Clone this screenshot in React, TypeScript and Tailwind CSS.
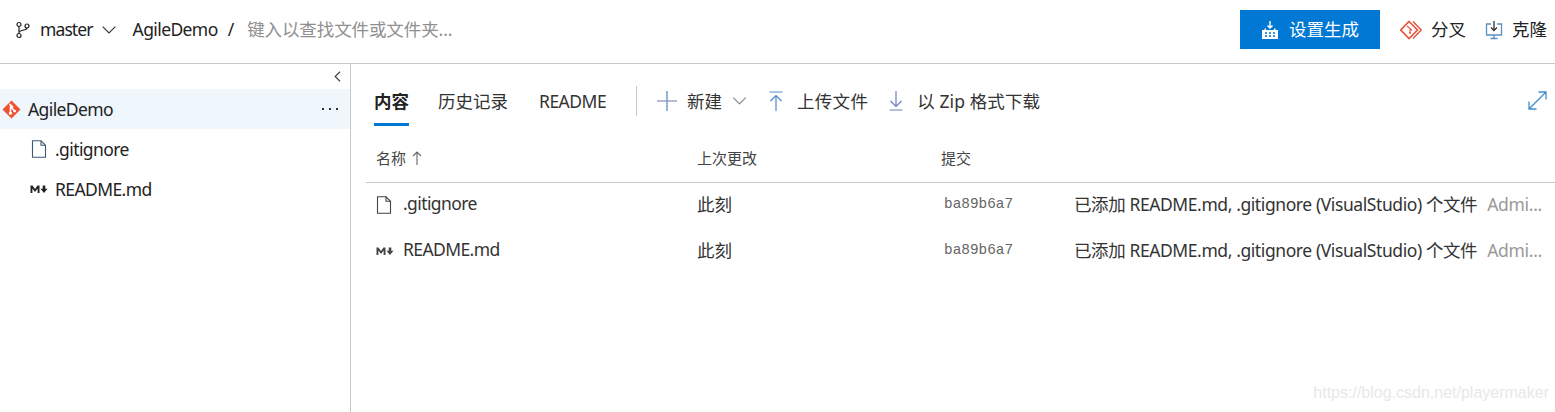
import React from "react";

const font = { fontFamily: '"Noto Sans", "Noto Sans CJK SC", sans-serif' };

function BranchIcon() {
  return (
    <svg width="16" height="18" viewBox="0 0 16 18" fill="none" stroke="#222" strokeWidth="1.2">
      <circle cx="4" cy="3.5" r="2" />
      <circle cx="4" cy="14.5" r="2" />
      <circle cx="12" cy="5" r="2" />
      <path d="M4 5.5v7M4 11.5c0-3 8-1.5 8-4.5" />
    </svg>
  );
}

function GitLogo({ size = 19 }: { size?: number }) {
  return (
    <svg width={size} height={size} viewBox="0 0 18 18">
      <path d="M9 0.5l8.5 8.5L9 17.5 0.5 9z" fill="#f05133" />
      <path d="M7 3.5l3.5 3.5M8 5v7.5M8 6.5l4 4" stroke="#fff" strokeWidth="1.4" fill="none" />
      <circle cx="8" cy="12.5" r="1.5" fill="#fff" />
      <circle cx="12" cy="10.5" r="1.3" fill="#fff" />
    </svg>
  );
}

function ForkIcon() {
  return (
    <svg width="22" height="22" viewBox="0 0 22 22" fill="none">
      <path d="M9 2.5l8.5 8.5L9 19.5 0.8 11z" stroke="#e8573f" strokeWidth="1.7" />
      <path d="M13 2.5l8.2 8.5L13 19.5" stroke="#e8573f" strokeWidth="1.5" />
      <path d="M7 7l3 2.5v4.5M10 9.5l2 2" stroke="#e8573f" strokeWidth="1.1" />
      <circle cx="10" cy="14" r="1.1" fill="#e8573f" />
    </svg>
  );
}

function CloneIcon() {
  return (
    <svg width="18" height="20" viewBox="0 0 18 20" fill="none">
      <path d="M6 4H1.5v11h15V4H12" stroke="#5a8fc4" strokeWidth="1.3" />
      <path d="M5.5 18.5h7M9 15v3.5" stroke="#5a8fc4" strokeWidth="1.3" />
      <path d="M9 1v9M6 7.5l3 3 3-3" stroke="#333" strokeWidth="1.3" />
    </svg>
  );
}

function BuildIcon() {
  return (
    <svg width="18" height="20" viewBox="0 0 18 20" fill="none">
      <path d="M9 1v7M6.5 5.5L9 8l2.5-2.5" stroke="#fff" strokeWidth="1.4" />
      <path d="M1 19V10h2.5V8.5H5V10h8V8.5h1.5V10H17v9z" fill="#fff" />
      <path d="M4 13h2M8 13h2M12 13h2M4 16h2M8 16h2M12 16h2" stroke="#0078d4" strokeWidth="1.4" />
    </svg>
  );
}

function FileIcon({ stroke = "#444" }: { stroke?: string }) {
  return (
    <svg width="16" height="18" viewBox="0 0 16 18" fill="none">
      <path d="M1.5 0.8h8.5l4.5 4.5v11.9h-13z" stroke={stroke} strokeWidth="1.1" />
      <path d="M10 0.8v4.5h4.5" stroke={stroke} strokeWidth="1.1" />
    </svg>
  );
}

function MdIcon({ color = "#222" }: { color?: string }) {
  return (
    <svg width="18" height="10" viewBox="0 0 18 10">
      <path d="M0.5 9V1.5h2L5 5l2.5-3.5h2V9H7.6V4.6L5 8 2.4 4.6V9z" fill={color} />
      <path d="M12.7 1.5h2.6v3.2h2.2L14 8.9l-3.5-4.2h2.2z" fill={color} />
    </svg>
  );
}

function Chevron({ color = "#333", w = 14 }: { color?: string; w?: number }) {
  return (
    <svg width={w} height="8" viewBox="0 0 14 8" fill="none">
      <path d="M0.7 0.7L7 7l6.3-6.3" stroke={color} strokeWidth="1.1" />
    </svg>
  );
}

function PlusIcon() {
  return (
    <svg width="20" height="20" viewBox="0 0 20 20" fill="none">
      <path d="M10 0v20" stroke="#5b8fc7" strokeWidth="1.3" />
      <path d="M0 10h20" stroke="#8a96c0" strokeWidth="1.3" />
    </svg>
  );
}

function UploadIcon() {
  return (
    <svg width="14" height="20" viewBox="0 0 14 20" fill="none" stroke="#4e8ac8" strokeWidth="1.2">
      <path d="M0.5 1h13M7 4.5V20M1.5 10L7 4.5 12.5 10" />
    </svg>
  );
}

function DownloadIcon() {
  return (
    <svg width="14" height="20" viewBox="0 0 14 20" fill="none" stroke="#6c7fc4" strokeWidth="1.2">
      <path d="M0.5 19h13M7 0v15M1.5 10L7 15.5 12.5 10" />
    </svg>
  );
}

function ExpandIcon() {
  return (
    <svg width="19" height="19" viewBox="0 0 19 19" fill="none" stroke="#3f8fd0" strokeWidth="1.3">
      <path d="M1 18L18 1M10.5 1H18v7.5M1 10.5V18h7.5" />
    </svg>
  );
}

function Row({ icon, name }: { icon: React.ReactNode; name: string }) {
  return (
    <div className="flex h-[46px] items-center text-[#333] text-[17.5px] pb-[3px]">
      <div className="w-[321px] flex items-center pl-[10px]">
        <span className="w-[27px] flex items-center">{icon}</span>
        <span className="tracking-[-0.6px] -mt-[2px]">{name}</span>
      </div>
      <div className="w-[246px] pl-[10px] text-[17.5px]">此刻</div>
      <div className="w-[141px] pl-[11px] text-[14.4px] text-[#666]" style={{ fontFamily: '"Liberation Mono", monospace' }}>ba89b6a7</div>
      <div className="flex-1 flex items-center whitespace-nowrap overflow-hidden">
        <span className="tracking-[-0.41px]">已添加 README.md, .gitignore (VisualStudio) 个文件</span>
        <span className="ml-[10px] text-[#999] tracking-[-0.3px]">Admi...</span>
      </div>
    </div>
  );
}

export default function App() {
  return (
    <div className="relative w-[1555px] h-[412px] bg-white overflow-hidden flex flex-col text-[#222]" style={font}>
      <header className="h-[64px] shrink-0 border-b border-[#c8c8c8] flex items-center pl-[15px] pr-[8px] text-[17.5px] pb-[4px]">
        <BranchIcon />
        <span className="ml-[9px] tracking-[-0.9px]">master</span>
        <span className="ml-[9px]"><Chevron /></span>
        <span className="ml-[17px] tracking-[-0.6px]">AgileDemo</span>
        <span className="ml-[10px]">/</span>
        <span className="ml-[13px] text-[#8f8f8f] tracking-[-0.1px]">键入以查找文件或文件夹...</span>
        <div className="flex-1" />
        <button className="w-[140px] h-[39px] bg-[#0078d4] text-white flex items-center justify-center gap-[10px]">
          <BuildIcon />
          设置生成
        </button>
        <span className="ml-[20px] flex items-center"><ForkIcon /></span>
        <span className="ml-[9px]">分叉</span>
        <span className="ml-[19px] flex items-center"><CloneIcon /></span>
        <span className="ml-[9px]">克隆</span>
      </header>
      <div className="flex flex-1 min-h-0">
        <aside className="w-[351px] shrink-0 border-r border-[#c8c8c8] flex flex-col">
          <div className="h-[25px] flex items-center justify-end pr-[9px]">
            <svg width="7" height="11" viewBox="0 0 7 11" fill="none"><path d="M6 0.8L1.2 5.5 6 10.2" stroke="#444" strokeWidth="1.2" /></svg>
          </div>
          <div className="h-[40px] bg-[#eff6fc] flex items-center pl-[2px] pr-[12px] text-[17.5px]">
            <GitLogo />
            <span className="ml-[7px] tracking-[-0.6px] flex-1">AgileDemo</span>
            <span className="flex gap-[5px]">
              <i className="w-[2px] h-[2px] bg-[#333]" />
              <i className="w-[2px] h-[2px] bg-[#333]" />
              <i className="w-[2px] h-[2px] bg-[#333]" />
            </span>
          </div>
          <div className="h-[40px] flex items-center pl-[31px] text-[17.5px]">
            <FileIcon stroke="#3f5a75" />
            <span className="ml-[8px] tracking-[-0.6px]">.gitignore</span>
          </div>
          <div className="h-[40px] flex items-center pl-[30px] text-[17.5px]">
            <MdIcon />
            <span className="ml-[7px] tracking-[-0.6px]">README.md</span>
          </div>
        </aside>
        <main className="flex-1 min-w-0 flex flex-col pl-[15px]">
          <div className="h-[63px] shrink-0 flex items-start pr-[7px] text-[17.5px] text-[#333]">
            <div className="flex flex-col items-start ml-[8px] mt-[25px]">
              <span className="font-bold leading-[24px] text-[#222]">内容</span>
              <span className="mt-[10px] w-[35px] h-[3px] bg-[#0078d4]" />
            </div>
            <span className="ml-[29px] mt-[25px] leading-[24px] w-[72px] whitespace-nowrap">历史记录</span>
            <span className="ml-[29px] mt-[25px] leading-[24px] tracking-[-0.5px] w-[68px]">README</span>
            <span className="ml-[29px] mt-[22px] w-px h-[30px] bg-[#c8c8c8]" />
            <div className="ml-[20px] mt-[26px] flex items-center h-[22px]">
              <PlusIcon />
              <span className="ml-[10px]">新建</span>
              <span className="ml-[10px]"><Chevron color="#888" w={15} /></span>
              <span className="ml-[22px]"><UploadIcon /></span>
              <span className="ml-[14px] tracking-[0.3px]">上传文件</span>
              <span className="ml-[21px]"><DownloadIcon /></span>
              <span className="ml-[14px] tracking-[0.1px]">以 Zip 格式下载</span>
            </div>
            <div className="flex-1" />
            <span className="mt-[27px] mr-[1px]"><ExpandIcon /></span>
          </div>
          <div className="h-[56px] shrink-0 border-b border-[#c8c8c8] flex items-center text-[15px] text-[#444] pt-[7px]">
            <div className="w-[321px] pl-[10px] flex items-center gap-[6px]">
              名称
              <svg width="10" height="14" viewBox="0 0 10 14" fill="none" stroke="#666" strokeWidth="1.1"><path d="M5 14V1M1 5l4-4 4 4" /></svg>
            </div>
            <div className="w-[244px] pl-[10px]">上次更改</div>
            <div className="pl-[10px]">提交</div>
          </div>
          <Row icon={<FileIcon />} name=".gitignore" />
          <Row icon={<MdIcon color="#444" />} name="README.md" />
        </main>
      </div>
      <span className="absolute right-[6px] bottom-[7px] text-[16px] text-[#e8e8e8]" style={{ fontFamily: '"Liberation Sans", sans-serif' }}>https://blog.csdn.net/playermaker</span>
    </div>
  );
}
